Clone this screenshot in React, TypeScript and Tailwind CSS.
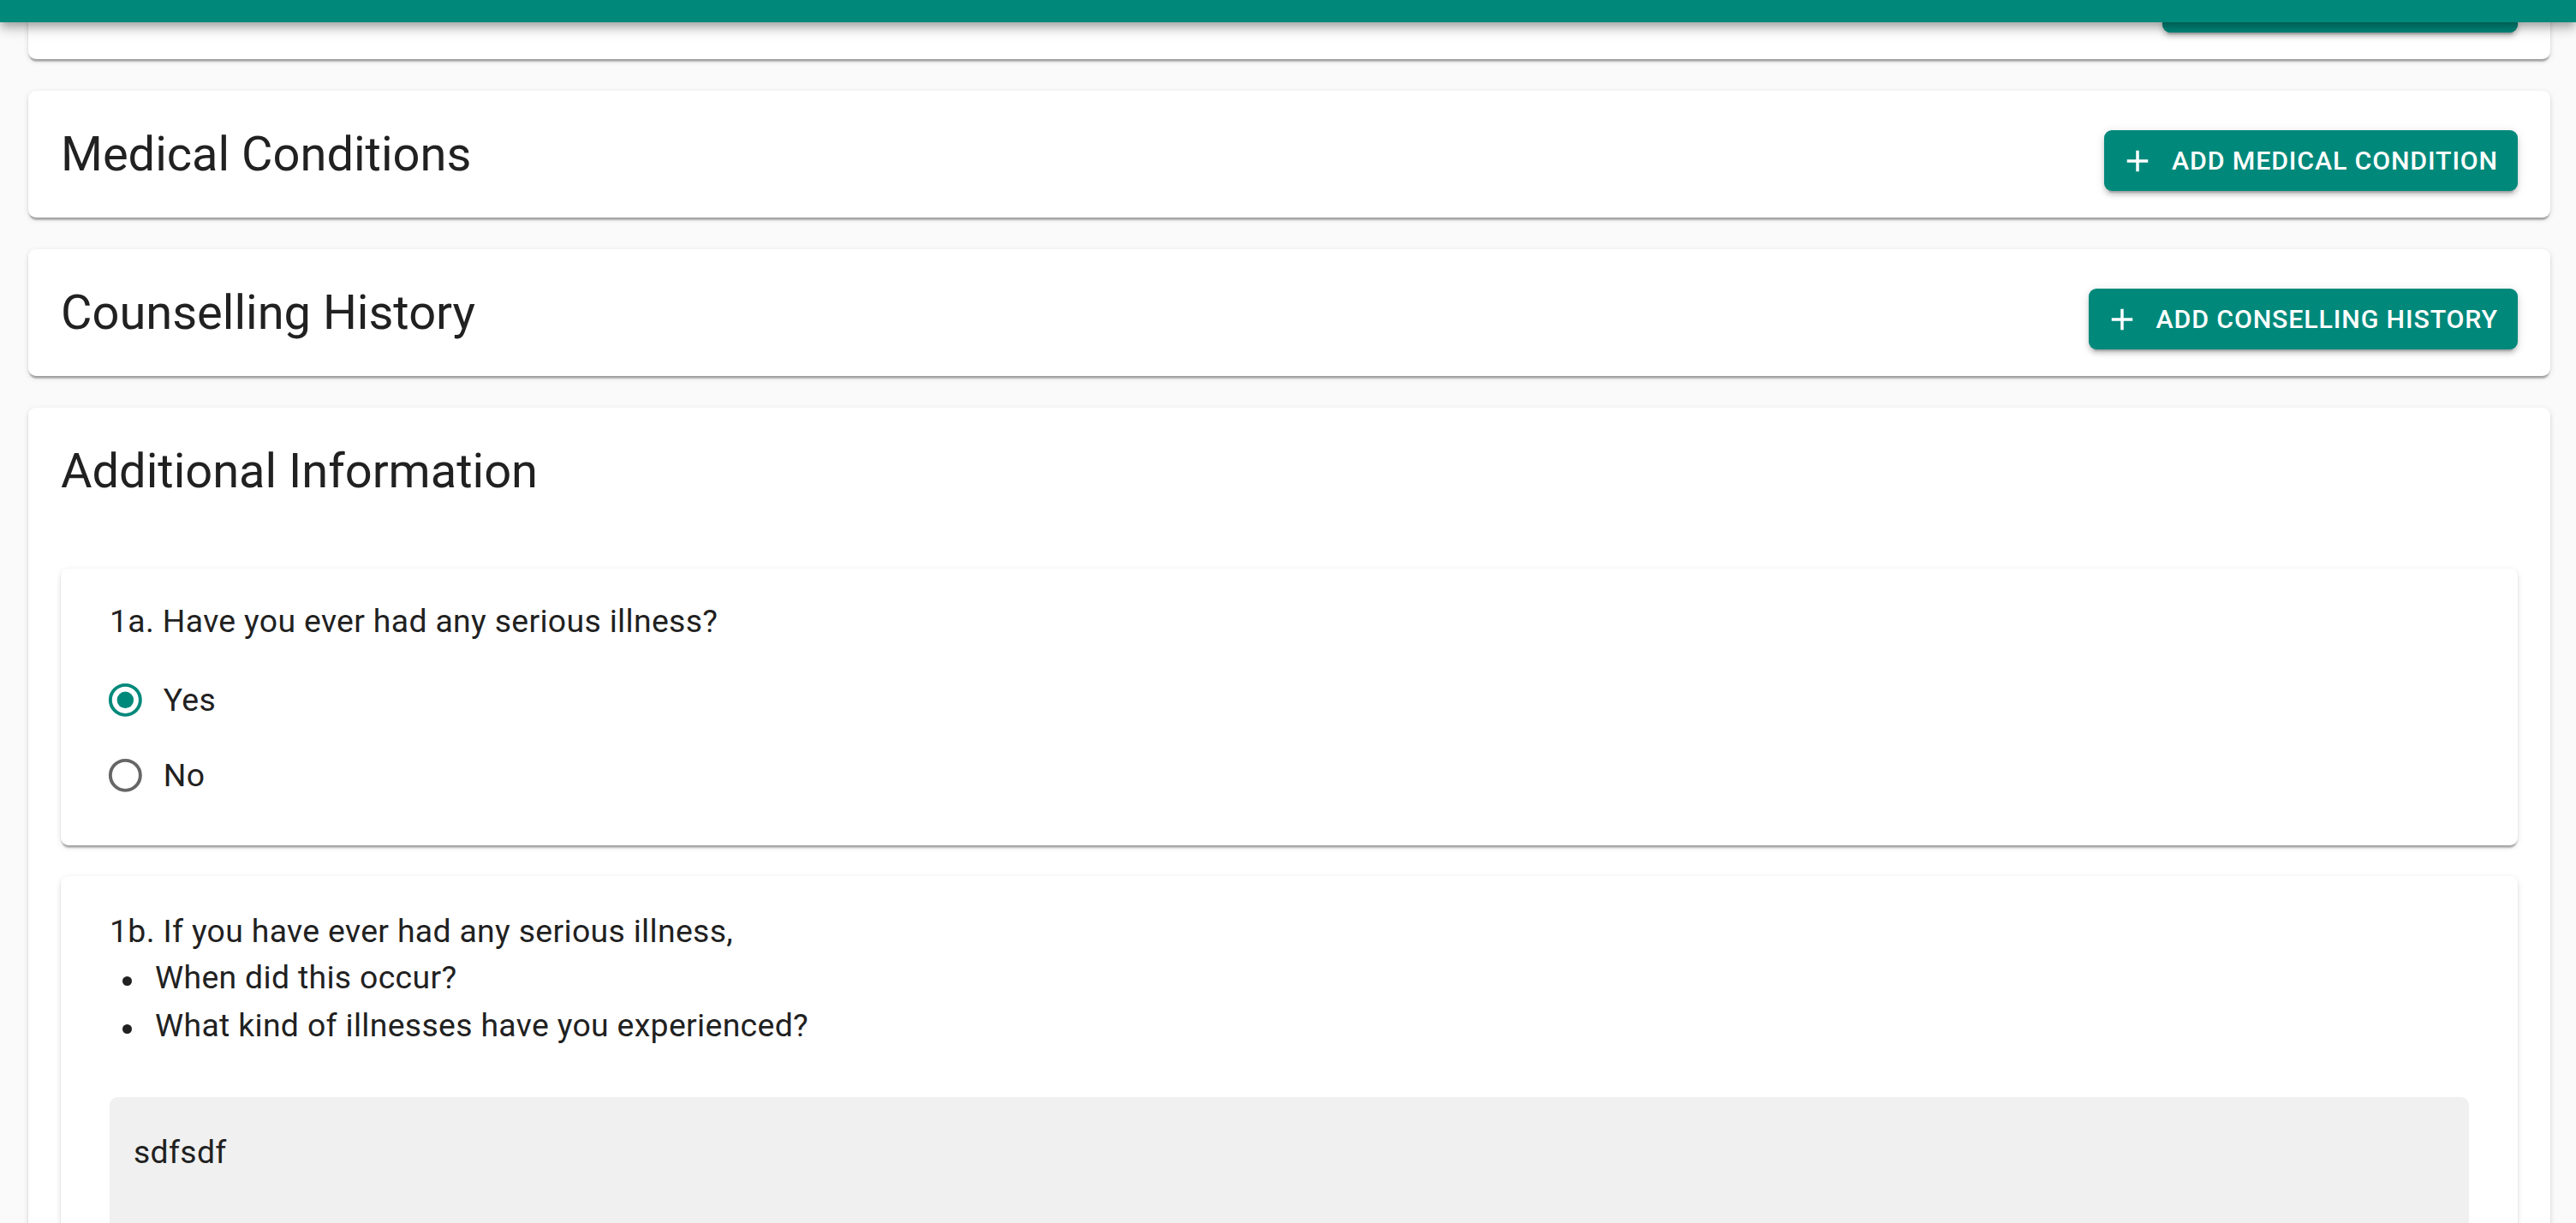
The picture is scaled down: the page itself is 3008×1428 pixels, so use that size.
import React from "react";

const cardShadow =
  "shadow-[0_5px_2px_-2px_rgba(0,0,0,0.2),0_2px_2px_0_rgba(0,0,0,0.14),0_2px_7px_0_rgba(0,0,0,0.12)]";

function PlusIcon() {
  return (
    <svg viewBox="0 0 24 24" className="w-[42px] h-[42px] ml-[-5px] mr-[19px] shrink-0" fill="currentColor">
      <path d="M19 13h-6v6h-2v-6H5v-2h6V5h2v6h6v2z" />
    </svg>
  );
}

function AddButton({ label, className = "" }: { label?: string; className?: string }) {
  return (
    <button
      className={
        "inline-flex items-center shrink-0 h-[71px] bg-[#00897b] text-white rounded-[9px] pl-[23px] pr-[23px] text-[30.33px] leading-[53px] font-medium uppercase tracking-[0.02857em] shadow-[0_7px_2px_-5px_rgba(0,0,0,0.2),0_5px_5px_0_rgba(0,0,0,0.14),0_2px_12px_0_rgba(0,0,0,0.12)] " +
        className
      }
    >
      {label && <PlusIcon />}
      {label && <span>{label}</span>}
    </button>
  );
}

function SectionCard({ title, button, btnClass }: { title?: string; button?: string; btnClass?: string }) {
  return (
    <div className={"bg-white rounded-[9px] " + cardShadow}>
      <div className="flex items-start justify-between px-[38px] pt-[37px] pb-[31px]">
        <h5 className="text-[56px] leading-[75px] h-[75px] mb-[5px] font-normal text-[#212121]">{title}</h5>
        <AddButton label={button} className={"mt-[9px] " + (btnClass ?? "")} />
      </div>
    </div>
  );
}

function Radio({ checked, label }: { checked: boolean; label: string }) {
  return (
    <label className="flex items-center ml-[-26px] h-[88px]">
      <span className="px-[21px] flex">
        <svg viewBox="0 0 24 24" className="w-[46.7px] h-[46.7px]">
          <circle
            cx="12"
            cy="12"
            r="9"
            fill="none"
            stroke={checked ? "#00897b" : "rgba(0,0,0,0.6)"}
            strokeWidth="2"
          />
          {checked && <circle cx="12" cy="12" r="5" fill="#00897b" />}
        </svg>
      </span>
      <span className="text-[37.33px] leading-[56px] tracking-[0.00938em] text-[#212121]">{label}</span>
    </label>
  );
}

function Bullet({ children }: { children: React.ReactNode }) {
  return (
    <li className="flex items-start">
      <span className="w-[11px] h-[11px] rounded-full bg-[#212121] mt-[27px] mr-[27px] shrink-0" />
      <span>{children}</span>
    </li>
  );
}

export default function App() {
  return (
    <div className="relative w-full h-[1428px] overflow-hidden bg-[#fafafa] [font-family:Roboto,'Liberation_Sans',sans-serif]">
      <div className="flex flex-col gap-[37px] pl-[33px] pr-[30px] mt-[-79px]">
        <SectionCard btnClass="w-[415px]" />
        <SectionCard title="Medical Conditions" button="Add Medical Condition" />
        <SectionCard title="Counselling History" button="Add Conselling History" />
        <div className={"bg-white rounded-t-[9px] px-[38px] pt-[37px] " + cardShadow}>
          <h5 className="text-[56px] leading-[75px] h-[75px] font-normal text-[#212121] mb-[76px]">
            Additional Information
          </h5>
          <div className="flex flex-col gap-[36px]">
            <div className={"bg-white rounded-[9px] px-[57px] pt-[33px] pb-[38px] " + cardShadow}>
              <p className="text-[37.33px] leading-[56px] tracking-[0.00938em] text-[#212121]">
                1a. Have you ever had any serious illness?
              </p>
              <div className="mt-[20px] flex flex-col">
                <Radio checked label="Yes" />
                <Radio checked={false} label="No" />
              </div>
            </div>
            <div className={"bg-white rounded-[9px] px-[57px] pt-[36px] pb-[37px] " + cardShadow}>
              <p className="text-[37.33px] leading-[56px] tracking-[0.00938em] text-[#212121]">
                1b. If you have ever had any serious illness,
              </p>
              <ul className="mt-[-2px] pl-[15px] text-[37.33px] leading-[56px] tracking-[0.00938em] text-[#212121]">
                <Bullet>When did this occur?</Bullet>
                <Bullet>What kind of illnesses have you experienced?</Bullet>
              </ul>
              <div className="mt-[56px] h-[400px] bg-[#f0f0f0] rounded-t-[9px] px-[28px] pt-[36px]">
                <p className="text-[37.33px] leading-[56px] tracking-[0.00938em] text-[#212121]">sdfsdf</p>
              </div>
            </div>
          </div>
        </div>
      </div>
      <div className="absolute top-0 left-0 right-0 h-[26px] bg-[#00897b] shadow-[0_5px_9px_-2px_rgba(0,0,0,0.2),0_9px_12px_0_rgba(0,0,0,0.14),0_2px_23px_0_rgba(0,0,0,0.12)]" />
    </div>
  );
}
